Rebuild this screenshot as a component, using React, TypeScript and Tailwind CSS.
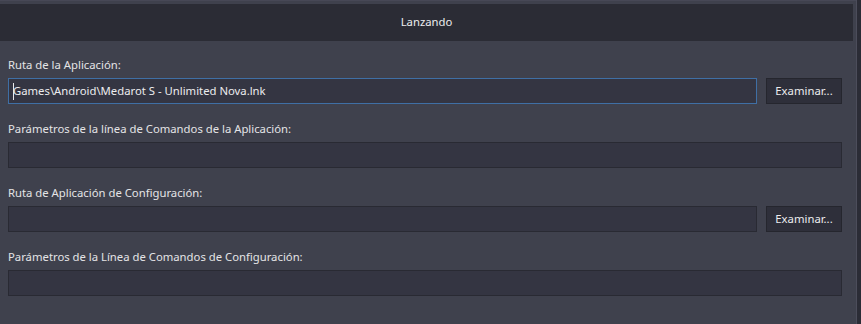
const fields = [
	{ label: 'Ruta de la Aplicación:', value: 'Games\\Android\\Medarot S - Unlimited Nova.lnk', browse: true, focused: true },
	{ label: 'Parámetros de la línea de Comandos de la Aplicación:', value: '', browse: false, focused: false },
	{ label: 'Ruta de Aplicación de Configuración:', value: '', browse: true, focused: false },
	{ label: 'Parámetros de la Línea de Comandos de Configuración:', value: '', browse: false, focused: false }
];

const Field = ({ label, value, browse, focused }: (typeof fields)[number]) => (
	<div className="flex flex-col">
		<div className="h-[20px] leading-[20px] mb-[3px] text-[#e4e4e6]">{label}</div>
		<div className="flex gap-[9px]">
			<div
				className={
					focused
						? 'flex-1 h-[26px] border border-[#3f6fa5] bg-[#343542] flex items-center pl-[4px] text-[#ececee]'
						: 'flex-1 h-[26px] border border-[#292a33] bg-[#343542] flex items-center pl-[4px] text-[#ececee]'
				}
			>
				{focused && <span className="w-px h-[17px] bg-[#e8e8ea] mr-[-1px]" />}
				<span>{value}</span>
			</div>
			{browse && (
				<button className="w-[76px] h-[26px] border border-[#25262e] bg-[#2e2f3a] text-[#ececee] flex items-center justify-center">
					Examinar...
				</button>
			)}
		</div>
	</div>
);

export default function App() {
	return (
		<div
			className="w-[861px] h-[324px] flex bg-[#3f414d] overflow-hidden text-[11.3px]"
			style={{ fontFamily: '"Noto Sans", "Open Sans", sans-serif' }}
		>
			<div className="w-[856px] flex flex-col">
				<div className="h-[4px] border-t border-[#474856]" />
				<div className="h-[37px] mr-[3px] bg-[#2b2c35] flex items-center justify-center text-[#ececee]">
					Lanzando
				</div>
				<div className="flex flex-col gap-[15px] pt-[14px] pl-[8px] pr-[14px]">
					{fields.map((f) => (
						<Field key={f.label} {...f} />
					))}
				</div>
			</div>
			<div className="w-px bg-[#4c4d5b]" />
			<div className="flex-1 bg-[#2b2c36]" />
		</div>
	);
}
